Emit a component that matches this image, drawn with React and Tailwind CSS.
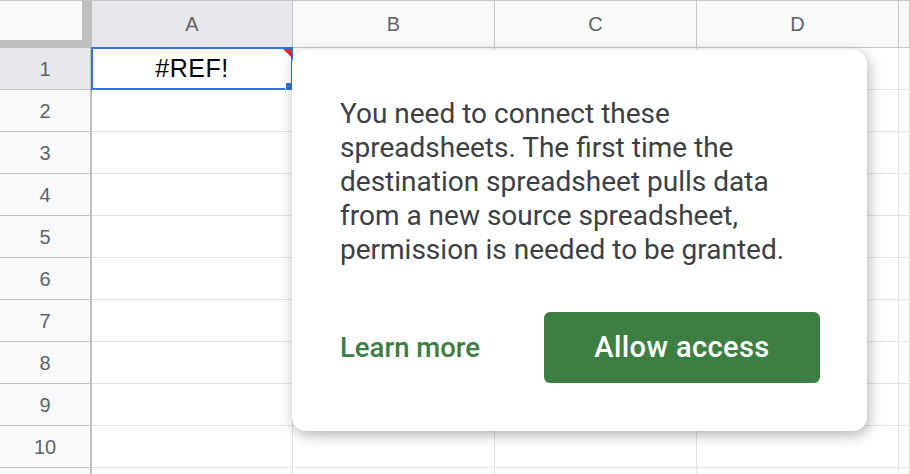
const columns = [
  { key: "A", width: "w-[201px]" },
  { key: "B", width: "w-[202px]" },
  { key: "C", width: "w-[202px]" },
  { key: "D", width: "w-[202px]" },
  { key: "E", width: "flex-1" },
];

const rows = [1, 2, 3, 4, 5, 6, 7, 8, 9, 10, 11];

function ColumnHeader({ col }) {
  const selected = col.key === "A";
  return (
    <div
      className={`${col.width} h-full flex items-center justify-center border-r border-b border-[#c4c7c5] text-[20px] text-[#5f6368] ${
        selected ? "bg-[#e6e8eb]" : "bg-[#f8f9fa]"
      }`}
    >
      {col.key === "E" ? "" : col.key}
    </div>
  );
}

function Cell({ col, row }) {
  const isA1 = col.key === "A" && row === 1;
  return (
    <div
      className={`${col.width} h-full relative border-r border-b border-[#e1e3e1] bg-white`}
    >
      {isA1 && (
        <>
          <div className="absolute -left-px -top-px -right-px -bottom-[2px] border-2 border-b-[3px] border-[#3574e0] flex items-center justify-center">
            <span className="text-[25px] tracking-[0.5px] text-black">#REF!</span>
          </div>
          {/* error marker */}
          <div className="absolute top-px right-0 w-0 h-0 border-l-[9px] border-l-transparent border-t-[9px] border-t-[#d93025]" />
          {/* fill handle */}
          <div className="absolute right-0 top-[35px] w-[7px] h-[12px] bg-[#3574e0] border-l border-white" />
        </>
      )}
    </div>
  );
}

export default function App() {
  return (
    <div
      className="relative w-[910px] h-[474px] overflow-hidden bg-white"
      style={{ fontFamily: '"Liberation Sans", Arial, sans-serif' }}
    >
      {/* Header row */}
      <div className="flex h-[48px] border-t border-[#c4c7c5]">
        <div className="w-[92px] h-full bg-[#bfbfbf] shrink-0">
          <div className="w-[82px] h-[39px] bg-[#f8f9fa]" />
        </div>
        {columns.map((col) => (
          <ColumnHeader key={col.key} col={col} />
        ))}
      </div>

      {/* Rows */}
      {rows.map((row) => (
        <div key={row} className="flex h-[42px]">
          <div
            className={`w-[92px] shrink-0 h-full flex items-center justify-center border-r-2 border-b border-[#c0c0c0] text-[20px] text-[#5f6368] ${
              row === 1 ? "bg-[#e6e8eb]" : "bg-[#f8f9fa]"
            }`}
          >
            {row <= 10 ? row : ""}
          </div>
          {columns.map((col) => (
            <Cell key={col.key} col={col} row={row} />
          ))}
        </div>
      ))}

      {/* Permission popup */}
      <div
        className="absolute left-[292px] top-[50px] w-[575px] h-[381px] rounded-[14px] bg-white shadow-[2px_4px_14px_rgba(0,0,0,0.3)] pl-[48px] pr-[47px] flex flex-col"
        style={{ fontFamily: "Roboto, Arial, sans-serif" }}
      >
        <p className="mt-[47px] text-[28px] leading-[34px] text-[#3c4043]">
          You need to connect these
          <br />
          spreadsheets. The first time the
          <br />
          destination spreadsheet pulls data
          <br />
          from a new source spreadsheet,
          <br />
          permission is needed to be granted.
        </p>
        <div className="mt-[45px] flex items-center justify-between">
          <span className="text-[27.5px] font-medium text-[#3b7d43]">
            Learn more
          </span>
          <button className="w-[276px] h-[71px] rounded-[6px] bg-[#3d7f43] text-white text-[29px] tracking-[0.4px] font-medium">
            Allow access
          </button>
        </div>
      </div>
    </div>
  );
}
